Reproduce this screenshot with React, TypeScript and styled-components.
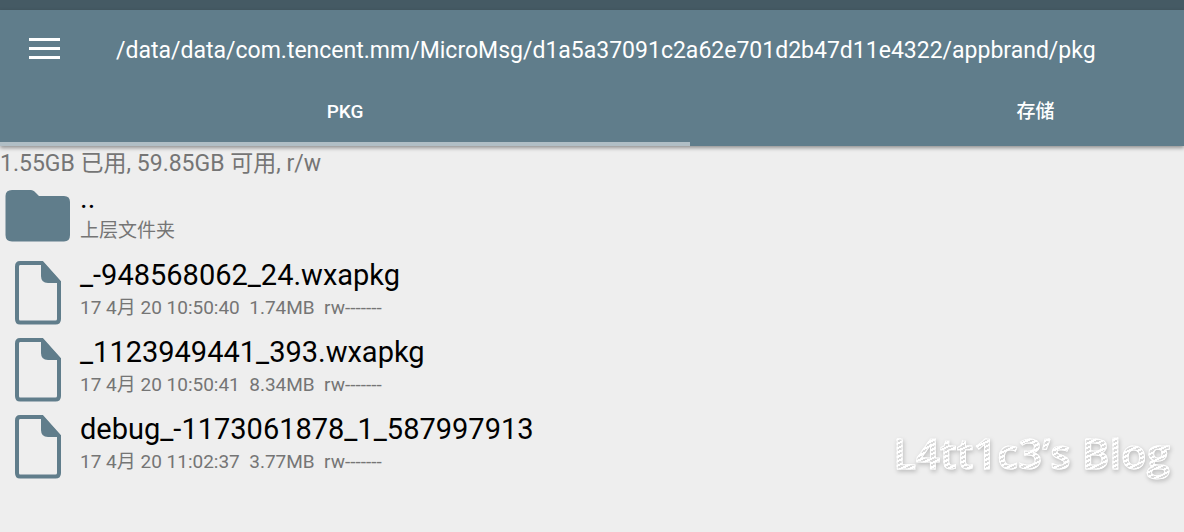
import React from "react";
import styled, { createGlobalStyle } from "styled-components";

const slate = "#607d8b";

const GlobalStyle = createGlobalStyle`
  * { box-sizing: border-box; }
  body {
    margin: 0;
    background: #eeeeee;
    font-family: Roboto, "Noto Sans CJK SC", sans-serif;
  }
`;

const Page = styled.div`
  position: relative;
  min-height: 100vh;
  overflow: hidden;
`;

const StatusBar = styled.div`
  height: 10px;
  background: #455a64;
`;

const Header = styled.header`
  position: relative;
  background: ${slate};
  color: #ffffff;
  box-shadow: 0 2px 4px rgba(0, 0, 0, 0.4);
`;

const Toolbar = styled.div`
  display: flex;
  align-items: center;
  height: 78px;
  padding: 0 24px;
  gap: 51px;
`;

const MenuButton = styled.button`
  display: flex;
  padding: 5px;
  border: 0;
  background: none;
  color: inherit;
`;

const Path = styled.h1`
  margin: 0;
  padding-top: 4px;
  font-size: 23px;
  font-weight: 400;
  line-height: 28px;
  white-space: nowrap;
`;

const Tabs = styled.div`
  display: flex;
  overflow: hidden;
`;

const Tab = styled.button<{ $active?: boolean }>`
  flex: 0 0 58.3%;
  height: 58px;
  padding: 0 0 6px;
  border: 0;
  border-bottom: 4px solid ${(p) => (p.$active ? "#b0bec5" : "transparent")};
  background: none;
  color: inherit;
  font-family: inherit;
  font-size: 19px;
  font-weight: 500;
  line-height: 24px;
`;

const Storage = styled.p`
  margin: 0;
  padding-top: 5px;
  color: #757575;
  font-size: 23px;
  line-height: 26px;
`;

const FileList = styled.ul`
  margin: 0;
  padding: 0;
  list-style: none;
`;

const FileRow = styled.li`
  display: flex;
  align-items: center;
  height: 77px;
`;

const IconCell = styled.div`
  display: flex;
  justify-content: center;
  flex: 0 0 76px;
  margin-right: 4px;
`;

const FileText = styled.div`
  display: flex;
  flex-direction: column;
  padding-bottom: 4px;
`;

const FileName = styled.span`
  color: #000000;
  font-size: 29px;
  line-height: 34px;
  white-space: nowrap;
`;

const FileMeta = styled.span`
  color: #757575;
  font-size: 19px;
  line-height: 32px;
  white-space: pre;
`;

const Watermark = styled.div`
  position: absolute;
  right: 14px;
  bottom: 53px;
  font-family: "Open Sans", sans-serif;
  font-size: 42px;
  font-weight: 600;
  line-height: 52px;
  white-space: nowrap;
  color: transparent;
  background: repeating-linear-gradient(155deg, #ffffff 0 2px, #d8d8d8 2px 4px);
  background-clip: text;
  -webkit-background-clip: text;
  -webkit-text-stroke: 1px #ffffff;
  filter: drop-shadow(1px 2px 2px rgba(0, 0, 0, 0.2));
`;

const FolderIcon = () => (
  <svg width="66" height="54" viewBox="0 0 66 54" aria-hidden="true">
    <path
      d="M7 1H26Q28 1 29.500 2.500L34 7H59Q65 7 65 13V46Q65 52.500 59 52.500H7Q0.500 52.500 0.500 46V7Q0.500 1 7 1Z"
      fill={slate}
    />
  </svg>
);

const DocumentIcon = () => (
  <svg width="46" height="64" viewBox="0 0 46 64" aria-hidden="true">
    <path
      d="M5 2H27L44 21V58Q44 61.500 40.500 61.500H5Q2 61.500 2 58V5.500Q2 2 5 2Z"
      fill="none"
      stroke={slate}
      strokeWidth="4"
    />
    <path d="M26 1H28L45 20V22H33Q26 22 26 15Z" fill={slate} />
  </svg>
);

const files = [
  { name: "..", meta: "上层文件夹", folder: true },
  { name: "_-948568062_24.wxapkg", meta: "17 4月 20 10:50:40  1.74MB  rw-------" },
  { name: "_1123949441_393.wxapkg", meta: "17 4月 20 10:50:41  8.34MB  rw-------" },
  { name: "debug_-1173061878_1_587997913", meta: "17 4月 20 11:02:37  3.77MB  rw-------" },
];

export default function App() {
  return (
    <Page>
      <GlobalStyle />
      <StatusBar />
      <Header>
        <Toolbar>
          <MenuButton aria-label="Menu">
            <svg width="31" height="22" viewBox="0 0 31 22" aria-hidden="true">
              <path d="M0 1.500H31M0 10.500H31M0 19.500H31" stroke="#ffffff" strokeWidth="3" />
            </svg>
          </MenuButton>
          <Path>/data/data/com.tencent.mm/MicroMsg/d1a5a37091c2a62e701d2b47d11e4322/appbrand/pkg</Path>
        </Toolbar>
        <Tabs role="tablist">
          <Tab role="tab" aria-selected="true" $active>PKG</Tab>
          <Tab role="tab" aria-selected="false">存储</Tab>
        </Tabs>
      </Header>
      <main>
        <Storage>1.55GB 已用, 59.85GB 可用, r/w</Storage>
        <FileList>
          {files.map((file) => (
            <FileRow key={file.name}>
              <IconCell>{file.folder ? <FolderIcon /> : <DocumentIcon />}</IconCell>
              <FileText>
                <FileName>{file.name}</FileName>
                <FileMeta>{file.meta}</FileMeta>
              </FileText>
            </FileRow>
          ))}
        </FileList>
      </main>
      <Watermark>L4tt1c3’s Blog</Watermark>
    </Page>
  );
}
